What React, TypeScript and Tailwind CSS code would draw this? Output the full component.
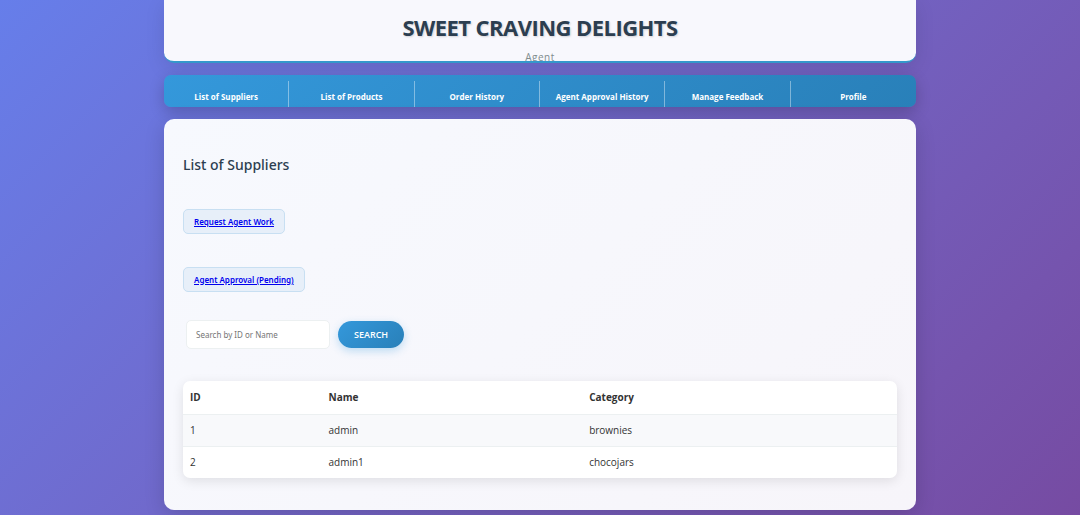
const navItems = [
  "List of Suppliers",
  "List of Products",
  "Order History",
  "Agent Approval History",
  "Manage Feedback",
  "Profile",
];

const suppliers = [
  { id: 1, name: "admin", category: "brownies" },
  { id: 2, name: "admin1", category: "chocojars" },
];

const requests = ["Request Agent Work", "Agent Approval (Pending)"];

function Header() {
  return (
    <header className="h-[63px] overflow-hidden rounded-b-[10px] border-b-2 border-[#3498cb] bg-[#f8f8fd] pt-[11px] text-center shadow-[0_5px_20px_rgba(0,0,0,0.1)]">
      <h1 className="text-[22px] leading-8 font-bold tracking-tight text-[#2c3e50] [text-shadow:1px_1px_2px_rgba(0,0,0,0.15)]">
        SWEET CRAVING DELIGHTS
      </h1>
      <p className="mt-[6px] text-[10px] leading-4 tracking-wider text-[#7f8c8d]">Agent</p>
    </header>
  );
}

function Nav() {
  return (
    <nav className="mt-3 overflow-hidden rounded-[7px] bg-linear-135 from-[#3498db] to-[#2980b9] pt-[6px] shadow-[0_5px_15px_rgba(0,0,0,0.2)]">
      <ul className="grid grid-cols-6">
        {navItems.map((item) => (
          <li key={item} className="border-r border-white/40 last:border-r-0">
            <a
              href="#"
              className="block h-[26px] pt-2 text-center text-[8px] leading-4 font-bold whitespace-nowrap text-white"
            >
              {item}
            </a>
          </li>
        ))}
      </ul>
    </nav>
  );
}

function SupplierTable() {
  return (
    <div className="mt-8 overflow-hidden rounded-[7px] bg-white shadow-[0_3px_12px_rgba(0,0,0,0.1)]">
      <table className="w-full table-fixed border-collapse text-left text-[10px] leading-4 text-[#333]">
        <colgroup>
          <col className="w-[19.4%]" />
          <col className="w-[36.5%]" />
          <col />
        </colgroup>
        <thead>
          <tr className="h-[33px] border-b border-[#ecf0f1]">
            <th className="px-[7px] font-bold">ID</th>
            <th className="px-[7px] font-bold">Name</th>
            <th className="px-[7px] font-bold">Category</th>
          </tr>
        </thead>
        <tbody>
          {suppliers.map((s) => (
            <tr
              key={s.id}
              className="h-8 border-b border-[#ecf0f1] odd:bg-[#f8f9fb] last:border-b-0"
            >
              <td className="px-[7px]">{s.id}</td>
              <td className="px-[7px]">{s.name}</td>
              <td className="px-[7px]">{s.category}</td>
            </tr>
          ))}
        </tbody>
      </table>
    </div>
  );
}

export default function App() {
  return (
    <div className="min-h-screen bg-linear-135 from-[#667eea] to-[#764ba2] font-['Open_Sans','Noto_Sans',sans-serif]">
      <div className="mx-auto w-full max-w-[752px]">
        <Header />
        <Nav />
        <main className="mt-3 rounded-[10px] bg-linear-135 from-[#f7f9fe] to-[#f7f5fa] px-[19px] pt-[34px] pb-8 shadow-[0_5px_20px_rgba(0,0,0,0.15)]">
          <h2 className="font-['Noto_Sans','Open_Sans',sans-serif] text-[14px] leading-6 font-medium text-[#2c3e50]">
            List of Suppliers
          </h2>
          <div className="mt-8 flex flex-col items-start gap-[33px]">
            {requests.map((label) => (
              <a
                key={label}
                href="#"
                className="flex h-[25px] items-center rounded-[5px] border border-[#c8dff2] bg-[#e7eff9] px-[10px] font-['Noto_Sans','Open_Sans',sans-serif] text-[8px] font-semibold text-[#0000ee] underline"
              >
                {label}
              </a>
            ))}
          </div>
          <form className="mt-7 flex items-center gap-2 pl-[3px]" onSubmit={(e) => e.preventDefault()}>
            <input
              type="text"
              aria-label="Search by ID or Name"
              placeholder="Search by ID or Name"
              className="h-[29px] w-36 rounded-[5px] border border-[#ecf0f1] bg-white px-[9px] font-['Noto_Sans','Open_Sans',sans-serif] text-[8px] text-[#333] placeholder:text-[#757575]"
            />
            <button
              type="submit"
              className="h-[27px] rounded-full bg-linear-135 from-[#3498db] to-[#2980b9] px-4 text-[9px] font-semibold text-white shadow-[0_3px_8px_rgba(52,152,219,0.3)]"
            >
              SEARCH
            </button>
          </form>
          <SupplierTable />
        </main>
      </div>
    </div>
  );
}
